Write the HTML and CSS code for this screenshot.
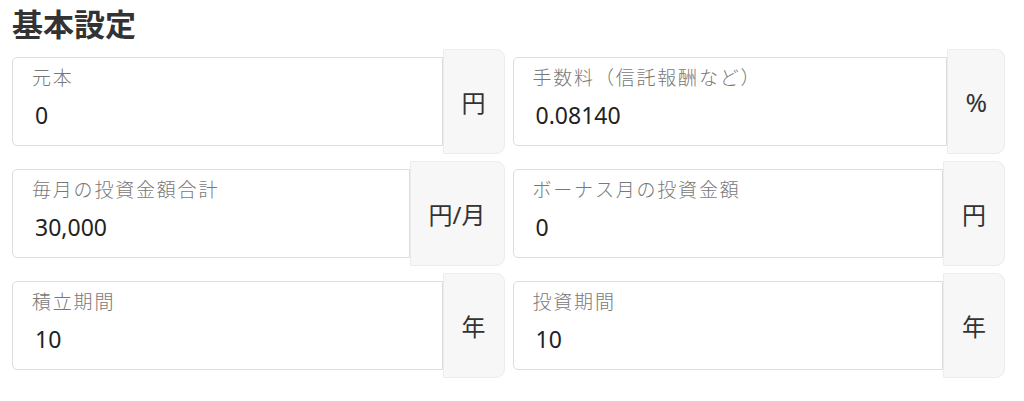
FILE: index.html
```html
<!DOCTYPE html>
<html lang="ja">
<head>
<meta charset="utf-8">
<title>基本設定</title>
<link rel="stylesheet" href="styles.css">
</head>
<body>
<section class="settings">
  <h2 class="title">基本設定</h2>
  <div class="grid">
    <div class="field">
      <div class="box"><div class="label">元本</div><div class="value">0</div></div>
      <div class="unit">円</div>
    </div>
    <div class="field">
      <div class="box"><div class="label">手数料（信託報酬など）</div><div class="value">0.08140</div></div>
      <div class="unit unit-pct">%</div>
    </div>
    <div class="field">
      <div class="box"><div class="label">毎月の投資金額合計</div><div class="value">30,000</div></div>
      <div class="unit">円/月</div>
    </div>
    <div class="field">
      <div class="box"><div class="label">ボーナス月の投資金額</div><div class="value">0</div></div>
      <div class="unit">円</div>
    </div>
    <div class="field">
      <div class="box"><div class="label">積立期間</div><div class="value">10</div></div>
      <div class="unit">年</div>
    </div>
    <div class="field">
      <div class="box"><div class="label">投資期間</div><div class="value">10</div></div>
      <div class="unit">年</div>
    </div>
  </div>
</section>
</body>
</html>
```
FILE: styles.css
```css
html, body {
  margin: 0;
  padding: 0;
  background: #ffffff;
}
body {
  font-family: "Noto Sans", "Noto Sans CJK JP", sans-serif;
  color: #222;
}
.settings {
  padding: 0 19px 0 12px;
}
.title {
  margin: 5px 0 8px;
  font-family: "Noto Sans CJK JP", sans-serif;
  font-size: 31px;
  line-height: 36px;
  font-weight: 700;
  color: #333;
}
.grid {
  display: grid;
  grid-template-columns: 1fr 1fr;
  column-gap: 8px;
  row-gap: 7px;
}
.field {
  display: flex;
  align-items: stretch;
  height: 105px;
}
.box {
  flex: 1;
  margin: 8px 0;
  border: 1px solid #dcdcdc;
  border-radius: 5px 0 0 5px;
  background: #fff;
  padding: 9px 0 19px 19px;
}
.label {
  font-family: "Noto Sans CJK JP", sans-serif;
  font-size: 19px;
  font-weight: 300;
  letter-spacing: 1.8px;
  line-height: 20px;
  color: #787878;
  white-space: nowrap;
}
.value {
  margin-top: 17px;
  padding-left: 3px;
  font-size: 23px;
  line-height: 23px;
  color: #222;
}
.unit {
  display: flex;
  align-items: center;
  justify-content: center;
  padding: 0 18px;
  background: #f7f7f7;
  border: 1px solid #ececec;
  border-radius: 0 9px 9px 0;
  font-family: "Noto Sans", "Noto Sans CJK JP", sans-serif;
  font-size: 24px;
  color: #333;
  white-space: nowrap;
}
.unit-pct {
  font-size: 26px;
  padding: 0 17px;
}
```
